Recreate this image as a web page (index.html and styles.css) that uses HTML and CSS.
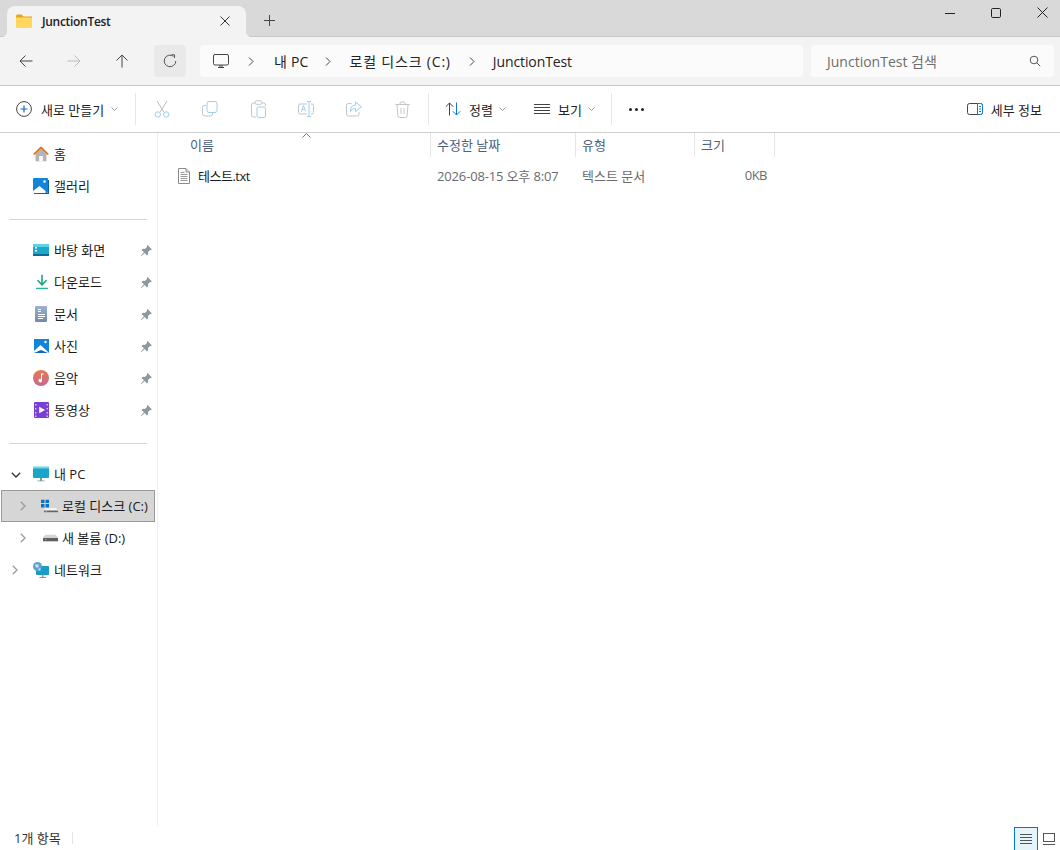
FILE: index.html
```html
<!DOCTYPE html>
<html lang="ko">
<head>
<meta charset="utf-8">
<title>JunctionTest</title>
<link rel="stylesheet" href="styles.css">
</head>
<body>
<div class="window">
  <header class="titlebar">
    <div class="tab">
      <svg class="tab-folder" width="16" height="14" viewBox="0 0 16 14"><path d="M0 2a1.500 1.500 0 0 1 1.500-1.500h4L7.500 2.500H16V4H0z" fill="#e8a618"/><path d="M0 3.500h14.500A1.500 1.500 0 0 1 16 5v7.500a1.500 1.500 0 0 1-1.500 1.500h-13A1.500 1.500 0 0 1 0 12.500z" fill="#ffd75e"/></svg>
      <span class="tab-title">JunctionTest</span>
      <svg class="tab-close" width="10" height="10" viewBox="0 0 10 10"><path d="M.5.5l9 9M9.500.5l-9 9" stroke="#333" fill="none"/></svg>
    </div>
    <svg class="tab-plus" width="11" height="11" viewBox="0 0 11 11"><path d="M5.500 0v11M0 5.500h11" stroke="#444" fill="none"/></svg>
    <div class="winctl">
      <span class="winbtn"><svg width="10" height="10" viewBox="0 0 10 10"><path d="M0 5.500h10" stroke="#222" fill="none"/></svg></span>
      <span class="winbtn"><svg width="10" height="10" viewBox="0 0 10 10"><rect x=".5" y=".5" width="9" height="9" rx="1.200" stroke="#222" fill="none"/></svg></span>
      <span class="winbtn"><svg width="11" height="11" viewBox="0 0 11 11"><path d="M.5.5l10 10M10.500.5l-10 10" stroke="#222" fill="none"/></svg></span>
    </div>
  </header>

  <nav class="navbar">
    <span class="navbtn"><svg width="14" height="14" viewBox="0 0 14 14"><path d="M13.500 7H1M6.500 1.500L1 7l5.500 5.500" stroke="#444" fill="none"/></svg></span>
    <span class="navbtn"><svg width="14" height="14" viewBox="0 0 14 14"><path d="M.5 7H13M7.500 1.500L13 7l-5.500 5.500" stroke="#bbb" fill="none"/></svg></span>
    <span class="navbtn"><svg width="14" height="14" viewBox="0 0 14 14"><path d="M7 13.500V1M1.500 6.500L7 1l5.500 5.500" stroke="#444" fill="none"/></svg></span>
    <span class="navbtn refresh"><svg width="14" height="14" viewBox="0 0 14 14"><path d="M10.500 2.300A5.800 5.800 0 1 0 12.800 7" stroke="#555" fill="none"/><path d="M8.500.8h3v3.200" stroke="#555" fill="none"/></svg></span>
    <div class="address">
      <svg class="pc-glyph" width="16" height="15" viewBox="0 0 16 15"><rect x=".5" y=".5" width="15" height="10.500" rx="1.500" stroke="#444" fill="none"/><path d="M5 13.500h6M7 11v2M9 11v2" stroke="#444" fill="none"/></svg>
      <svg class="crumb-chev c1" width="6" height="9" viewBox="0 0 6 9"><path d="M1 .5l4 4-4 4" stroke="#444" fill="none"/></svg>
      <span class="crumb c-pc">내 PC</span>
      <svg class="crumb-chev c2" width="6" height="9" viewBox="0 0 6 9"><path d="M1 .5l4 4-4 4" stroke="#444" fill="none"/></svg>
      <span class="crumb c-disk">로컬 디스크 (C:)</span>
      <svg class="crumb-chev c3" width="6" height="9" viewBox="0 0 6 9"><path d="M1 .5l4 4-4 4" stroke="#444" fill="none"/></svg>
      <span class="crumb c-folder">JunctionTest</span>
    </div>
    <div class="search">
      <span class="search-text">JunctionTest 검색</span>
      <svg width="12" height="12" viewBox="0 0 12 12"><circle cx="5" cy="5" r="3.800" stroke="#555" fill="none"/><path d="M7.800 7.800L11.200 11.200" stroke="#555" fill="none"/></svg>
    </div>
  </nav>

  <div class="toolbar">
    <div class="tool tool-new">
      <svg width="16" height="16" viewBox="0 0 16 16"><circle cx="8" cy="8" r="7.400" stroke="#444" fill="none"/><path d="M8 4.500v7M4.500 8h7" stroke="#0a6fc9" stroke-width="1.200" fill="none"/></svg>
      <span>새로 만들기</span>
      <svg class="caret" width="7" height="4" viewBox="0 0 7 4"><path d="M.5.500l3 3 3-3" stroke="#999" fill="none"/></svg>
    </div>
    <i class="tsep tsep-a"></i>
    <div class="iconbtn"><svg width="16" height="18" viewBox="0 0 16 18"><path d="M3 1l7.200 11.500M13 1L5.800 12.500" stroke="#bdbdbd" fill="none"/><circle cx="3.800" cy="14.500" r="2.700" stroke="#9fcdf2" fill="none"/><circle cx="12.200" cy="14.500" r="2.700" stroke="#9fcdf2" fill="none"/></svg></div>
    <div class="iconbtn"><svg width="16" height="16" viewBox="0 0 16 16"><path d="M4 4.500H2.500a2 2 0 0 0-2 2v6a2.500 2.500 0 0 0 2.500 2.500h5.500a2 2 0 0 0 2-2V12" stroke="#c4c4c4" fill="none"/><rect x="5" y=".5" width="10" height="11" rx="2" stroke="#9fcdf2" fill="none"/></svg></div>
    <div class="iconbtn"><svg width="15" height="18" viewBox="0 0 15 18"><path d="M4 3H2.500a2 2 0 0 0-2 2v10a2 2 0 0 0 2 2H5M11 3h1.500a2 2 0 0 1 2 2v1" stroke="#c4c4c4" fill="none"/><rect x="4" y=".8" width="7" height="3.500" rx="1.500" stroke="#c4c4c4" fill="none"/><rect x="6" y="7" width="8.500" height="10.500" rx="1.500" stroke="#9fcdf2" fill="none"/></svg></div>
    <div class="iconbtn"><svg width="16" height="16" viewBox="0 0 16 16"><path d="M9 3H2a1.500 1.500 0 0 0-1.500 1.500v7A1.500 1.500 0 0 0 2 13h7M13 3h1a1.500 1.500 0 0 1 1.500 1.500v7A1.500 1.500 0 0 1 14 13h-1" stroke="#c4c4c4" fill="none"/><path d="M9 .5h4M11 .5v15M9 15.500h4M3.500 10.500l2-6 2 6M4.300 8.500h2.400" stroke="#9fcdf2" fill="none"/></svg></div>
    <div class="iconbtn"><svg width="16" height="16" viewBox="0 0 16 16"><path d="M5.500 2.500H2.500a2 2 0 0 0-2 2v8.500a2 2 0 0 0 2 2h8.500a2 2 0 0 0 2-2v-2" stroke="#c4c4c4" fill="none"/><path d="M9.500 1v3C6 4.200 4.300 6.500 4.500 10.500 6 8 7.500 7.500 9.500 7.500v3l6-4.800z" stroke="#9fcdf2" fill="none"/></svg></div>
    <div class="iconbtn"><svg width="15" height="17" viewBox="0 0 15 17"><path d="M.5 3.500h14M5 3.500V2.300A1.300 1.300 0 0 1 6.300 1h2.400A1.300 1.300 0 0 1 10 2.300v1.200M2 3.500l.9 11.200a1.800 1.800 0 0 0 1.800 1.800h5.600a1.800 1.800 0 0 0 1.800-1.800L13 3.500M6 7v6M9 7v6" stroke="#c4c4c4" fill="none"/></svg></div>
    <i class="tsep tsep-b"></i>
    <div class="tool tool-sort">
      <svg width="16" height="14" viewBox="0 0 16 14"><path d="M4.500 13.500V1M.8 4.700L4.500 1l3.700 3.700" stroke="#444" fill="none"/><path d="M11.500.5V13M7.800 9.300l3.700 3.700 3.700-3.700" stroke="#0a78d4" fill="none"/></svg>
      <span>정렬</span>
      <svg class="caret" width="7" height="4" viewBox="0 0 7 4"><path d="M.5.500l3 3 3-3" stroke="#999" fill="none"/></svg>
    </div>
    <div class="tool tool-view">
      <svg width="16" height="11" viewBox="0 0 16 11"><path d="M0 .5h16M0 3.500h16M0 6.500h16M0 9.500h16" stroke="#444" fill="none"/></svg>
      <span>보기</span>
      <svg class="caret" width="7" height="4" viewBox="0 0 7 4"><path d="M.5.500l3 3 3-3" stroke="#999" fill="none"/></svg>
    </div>
    <i class="tsep"></i>
    <div class="dots"><i></i><i></i><i></i></div>
    <div class="tool tool-detail">
      <svg width="16" height="12" viewBox="0 0 16 12"><rect x=".5" y=".5" width="15" height="11" rx="2" stroke="#444" fill="none"/><path d="M10.500.5h3a2 2 0 0 1 2 2v7a2 2 0 0 1-2 2h-3z" stroke="#0a78d4" fill="#fff"/><path d="M12 3.500h2M12 6h2M12 8.500h2" stroke="#0a78d4" fill="none"/></svg>
      <span>세부 정보</span>
    </div>
  </div>

  <div class="body">
    <aside class="sidebar">
      <div class="nav-row"><svg class="ni" width="16" height="15" viewBox="0 0 16 15"><path d="M2.500 7v7a1 1 0 0 0 1 1h9a1 1 0 0 0 1-1V7L8 2z" fill="#b5b5b5"/><rect x="6.200" y="9.500" width="3.600" height="5.500" fill="#fff"/><path d="M.7 8L8 1l7.300 7" stroke="#e0700f" stroke-width="1.700" fill="none"/></svg><span>홈</span></div>
      <div class="nav-row"><svg class="ni" width="16" height="16" viewBox="0 0 16 16"><rect y="0" width="15" height="15" rx="1" fill="#1484d8"/><path d="M0 13l6.500-5 6 5v2H0z" fill="#fff"/><circle cx="11.500" cy="3.500" r="1.300" fill="#fff"/><path d="M15 2h1v14H1v-1h14z" fill="#0b63b0"/></svg><span>갤러리</span></div>
      <hr class="nav-sep">
      <div class="nav-row pinned"><svg class="ni" width="16" height="12" viewBox="0 0 16 12"><rect width="16" height="12" rx="1" fill="#1ca9c9"/><rect width="16" height="3" fill="#5cd2e6"/><rect y="10" width="16" height="2" fill="#0d6c91"/><path d="M2 3h2v1.500H2zM2 6h2v1.500H2z" fill="#fff"/></svg><span>바탕 화면</span><svg class="pin" width="11" height="11" viewBox="0 0 11 11"><path d="M6.500 0L11 4.500l-1 .6-1-.2-2 2.300.2 2L6 10.500 3.700 8 .6 11 0 10.400l3-3.100L.5 5l1.300-1.200 2 .2L6 2l-.2-1z" fill="#8d98a3"/></svg></div>
      <div class="nav-row pinned"><svg class="ni ni-dl" width="12" height="15" viewBox="0 0 12 15"><path d="M6 0v9.500M1.500 5.800L6 10.300l4.500-4.500" stroke="#1ba784" stroke-width="1.600" fill="none"/><path d="M0 14h12" stroke="#28b59a" stroke-width="1.600"/></svg><span>다운로드</span><svg class="pin" width="11" height="11" viewBox="0 0 11 11"><path d="M6.500 0L11 4.500l-1 .6-1-.2-2 2.300.2 2L6 10.500 3.700 8 .6 11 0 10.400l3-3.100L.5 5l1.300-1.200 2 .2L6 2l-.2-1z" fill="#8d98a3"/></svg></div>
      <div class="nav-row pinned"><svg class="ni ni-doc" width="12" height="16" viewBox="0 0 12 16"><defs><linearGradient id="doc" x1="0" y1="0" x2="0" y2="1"><stop offset="0" stop-color="#9fb2cc"/><stop offset="1" stop-color="#7089ab"/></linearGradient></defs><rect width="12" height="16" rx="1" fill="url(#doc)"/><path d="M3 3.500h3M3 5.500h3M3 8.500h7M3 10.500h7M3 12.500h5" stroke="#fff" fill="none"/></svg><span>문서</span><svg class="pin" width="11" height="11" viewBox="0 0 11 11"><path d="M6.500 0L11 4.500l-1 .6-1-.2-2 2.300.2 2L6 10.500 3.700 8 .6 11 0 10.400l3-3.100L.5 5l1.300-1.200 2 .2L6 2l-.2-1z" fill="#8d98a3"/></svg></div>
      <div class="nav-row pinned"><svg class="ni ni-nudge" width="15" height="14" viewBox="0 0 15 14"><rect width="15" height="14" fill="#1484d8"/><path d="M0 12l6.500-6 6.500 6 2 2H0z" fill="#fff"/><path d="M0 14l7-3 7 3z" fill="#1169b5"/><circle cx="11.500" cy="3" r="1.200" fill="#fff"/></svg><span>사진</span><svg class="pin" width="11" height="11" viewBox="0 0 11 11"><path d="M6.500 0L11 4.500l-1 .6-1-.2-2 2.300.2 2L6 10.500 3.700 8 .6 11 0 10.400l3-3.100L.5 5l1.300-1.200 2 .2L6 2l-.2-1z" fill="#8d98a3"/></svg></div>
      <div class="nav-row pinned"><svg class="ni" width="16" height="16" viewBox="0 0 16 16"><defs><linearGradient id="mus" x1="0" y1="0" x2="0" y2="1"><stop offset="0" stop-color="#e87a4e"/><stop offset="1" stop-color="#c8668f"/></linearGradient></defs><circle cx="8" cy="8" r="8" fill="url(#mus)"/><path d="M8 3.500h2.500v1.300H9V10.500A1.800 1.800 0 1 1 8 9z" fill="#fff"/></svg><span>음악</span><svg class="pin" width="11" height="11" viewBox="0 0 11 11"><path d="M6.500 0L11 4.500l-1 .6-1-.2-2 2.300.2 2L6 10.500 3.700 8 .6 11 0 10.400l3-3.100L.5 5l1.300-1.200 2 .2L6 2l-.2-1z" fill="#8d98a3"/></svg></div>
      <div class="nav-row pinned"><svg class="ni ni-nudge" width="15" height="16" viewBox="0 0 15 16"><rect width="15" height="16" rx="1" fill="#7b3fd6"/><path d="M5.200 4.800v6.400L11 8z" fill="#fff"/><path d="M1 2h1.500v1.500H1zM1 6h1.500v1.500H1zM1 10h1.500v1.500H1zM1 13.500h1.500V15H1zM12.500 2H14v1.500h-1.500zM12.500 6H14v1.500h-1.500zM12.500 10H14v1.500h-1.500zM12.500 13.500H14V15h-1.500z" fill="#d6bdf5"/></svg><span>동영상</span><svg class="pin" width="11" height="11" viewBox="0 0 11 11"><path d="M6.500 0L11 4.500l-1 .6-1-.2-2 2.300.2 2L6 10.500 3.700 8 .6 11 0 10.400l3-3.100L.5 5l1.300-1.200 2 .2L6 2l-.2-1z" fill="#8d98a3"/></svg></div>
      <hr class="nav-sep">
      <div class="nav-row has-chev"><svg class="chev" width="10" height="6" viewBox="0 0 10 6"><path d="M.8.800L5 5 9.200.8" stroke="#333" stroke-width="1.300" fill="none"/></svg><svg class="ni" width="16" height="15" viewBox="0 0 16 15"><rect width="16" height="11.500" rx="1" fill="#1aa5c9"/><rect width="16" height="2" fill="#6bdcec"/><path d="M7 11.500h2V14H7zM4.500 14h7v1h-7z" fill="#7a9aa8"/></svg><span>내 PC</span></div>
      <div class="nav-row sub selected"><svg class="chev r" width="6" height="10" viewBox="0 0 6 10"><path d="M.8.800L5 5 .8 9.200" stroke="#999" stroke-width="1.300" fill="none"/></svg><svg class="ni" width="17" height="13" viewBox="0 0 17 13"><path d="M0 0h3.500v3.500H0zM4.500 0H8v3.500H4.500zM0 4.500h3.500V8H0zM4.500 4.500H8V8H4.500z" fill="#1070c4"/><path d="M5 8.500h9.500L17 10.500v2.500H3v-2.500z" fill="#f4f4f4"/><rect x="3" y="11" width="14" height="2" fill="#666"/><rect x="4.500" y="11.500" width="1.500" height="1" fill="#4fd45f"/></svg><span>로컬 디스크 (C:)</span></div>
      <div class="nav-row sub"><svg class="chev r" width="6" height="10" viewBox="0 0 6 10"><path d="M.8.800L5 5 .8 9.200" stroke="#999" stroke-width="1.300" fill="none"/></svg><svg class="ni ni-vol" width="15" height="7" viewBox="0 0 15 7"><path d="M2.500 0h10L15 3v4H0V3z" fill="#d4d4d4"/><rect y="3.500" width="15" height="3.500" fill="#5f5f5f"/><rect x="2" y="4.500" width="1.500" height="1" fill="#4fd45f"/></svg><span>새 볼륨 (D:)</span></div>
      <div class="nav-row has-chev"><svg class="chev r" width="6" height="10" viewBox="0 0 6 10"><path d="M.8.800L5 5 .8 9.200" stroke="#999" stroke-width="1.300" fill="none"/></svg><svg class="ni" width="16" height="16" viewBox="0 0 16 16"><rect x="3" y="4" width="13" height="9" rx="1" fill="#1a9cc4"/><circle cx="4.500" cy="4.500" r="4.500" fill="#5c9fd0"/><path d="M2 2.500h3.500v3H3zM5.500 6.500h2v2h-2z" fill="#cfe6f2"/><path d="M9 13h1.500v2H9zM6.500 15h6.500v1H6.500z" fill="#7a9aa8"/></svg><span>네트워크</span></div>
    </aside>

    <main class="content">
      <div class="headers">
        <div class="col col-name">이름</div>
        <div class="col">수정한 날짜</div>
        <div class="col">유형</div>
        <div class="col">크기</div>
        <svg class="sort-caret" width="9" height="5" viewBox="0 0 9 5"><path d="M.5 4.500l4-4 4 4" stroke="#777" fill="none"/></svg>
      </div>
      <div class="file-row">
        <div class="cell cell-name">
          <svg width="12" height="16" viewBox="0 0 12 16"><path d="M.5.500h7.500l3.500 3.500v11.500H.5z" fill="#fff" stroke="#8a8a8a"/><path d="M8 .5V4h3.500" fill="#e4e4e4" stroke="#8a8a8a"/><path d="M2.500 4.500h4M2.500 6.500h7M2.500 8.500h7M2.500 10.500h7M2.500 12.500h7" stroke="#9a9a9a" fill="none"/></svg>
          <span>테스트.txt</span>
        </div>
        <div class="cell muted date">2026-08-15 오후 8:07</div>
        <div class="cell muted">텍스트 문서</div>
        <div class="cell muted size">0KB</div>
      </div>
    </main>
  </div>

  <footer class="status">
    <span class="count">1개 항목</span>
    <i class="status-sep"></i>
    <span class="viewbtn active"><svg width="12" height="11" viewBox="0 0 12 11"><path d="M0 .5h12M0 3.500h12M0 6.500h12M0 9.500h12" stroke="#555" fill="none"/></svg></span>
    <span class="viewbtn plain"><svg width="12" height="12" viewBox="0 0 12 12"><rect x=".5" y=".5" width="11" height="8" stroke="#555" fill="none"/><path d="M0 11.500h12" stroke="#555" fill="none"/></svg></span>
  </footer>
</div>
</body>
</html>
```
FILE: styles.css
```css
* { box-sizing: border-box; }
html, body { margin: 0; height: 100%; }
body {
  background: #fff;
  color: #1a1a1a;
  font-family: "Open Sans", "Noto Sans CJK KR", sans-serif;
  font-size: 13px;
}
svg { display: block; flex: none; }
.window { width: 1060px; height: 850px; display: flex; flex-direction: column; overflow: hidden; }

/* title bar */
.titlebar { height: 37px; background: #d9d9d9; border-bottom: 1px solid #c8c8c8; display: flex; align-items: flex-end; flex: none; }
.tab { width: 239px; height: 31px; margin-left: 7px; margin-bottom: -1px; background: #f3f3f3; border-radius: 8px 8px 0 0; display: flex; align-items: center; padding: 0 16px 1px 9px; position: relative; }
.tab::before, .tab::after { content: ""; position: absolute; bottom: 0; width: 6px; height: 6px; }
.tab::before { left: -6px; background: radial-gradient(circle at 0 0, transparent 6px, #f3f3f3 6.5px); }
.tab::after { right: -6px; background: radial-gradient(circle at 100% 0, transparent 6px, #f3f3f3 6.5px); }
.tab-title { margin-left: 10px; flex: 1; font-size: 12px; font-weight: 600; letter-spacing: -.3px; color: #222; }
.tab-plus { margin: 0 0 10px 18px; }
.winctl { margin-left: auto; margin-right: -5px; align-self: flex-start; display: flex; }
.winbtn { width: 46px; height: 25px; display: flex; align-items: center; justify-content: center; }

/* navigation */
.navbar { height: 49px; flex: none; background: #f3f3f3; border-bottom: 1px solid #c9c9c9; display: flex; align-items: center; padding: 0 6px 0 2px; }
.navbtn { width: 48px; height: 32px; display: flex; align-items: center; justify-content: center; }
.navbtn.refresh { width: 32px; background: #e9e9e9; border-radius: 4px; margin-left: 8px; }
.address { width: 603px; height: 32px; margin-left: 14px; background: #fbfbfb; border-radius: 4px; display: flex; align-items: center; padding-left: 13px; font-size: 14px; color: #222; }
.crumb { white-space: nowrap; }
.c1 { margin-left: 19px; }
.c-pc { margin-left: 20px; letter-spacing: .2px; }
.c2 { margin-left: 16px; }
.c-disk { margin-left: 19px; letter-spacing: .8px; }
.c3 { margin-left: 18px; }
.c-folder { margin-left: 18px; letter-spacing: -.1px; }
.search { flex: 1; height: 32px; margin-left: 8px; background: #fbfbfb; border-radius: 4px; display: flex; align-items: center; justify-content: space-between; padding: 0 13px 0 16px; font-size: 14px; color: #6d6d6d; }

/* toolbar */
.toolbar { height: 47px; flex: none; background: #fff; border-bottom: 1px solid #cfcfcf; display: flex; align-items: center; padding-left: 16px; color: #222; }
.tool { display: flex; align-items: center; }
.tool span { white-space: nowrap; }
.caret { margin-left: 6px; }
.tool-new { width: 119px; }
.tool-new span { margin-left: 9px; }
.tool-new .caret { margin-left: 7px; }
.tsep { width: 1px; height: 32px; background: #e6e6e6; flex: none; }
.tsep-a { margin-right: 2px; }
.tsep-b { margin-left: 2px; }
.iconbtn { width: 48px; height: 32px; display: flex; align-items: center; justify-content: center; }
.tool-sort { margin-left: 16px; width: 89px; }
.tool-sort span { margin-left: 8px; }
.tool-view { width: 77px; }
.tool-view span { margin-left: 8px; }
.dots { display: flex; gap: 3px; margin-left: 17px; }
.dots i { width: 3px; height: 3px; border-radius: 50%; background: #222; }
.tool-detail { margin-left: auto; padding-right: 18px; }
.tool-detail span { margin-left: 8px; }

/* body */
.body { flex: 1; display: flex; min-height: 0; }
.sidebar { width: 158px; flex: none; border-right: 1px solid #f0f0f0; padding-top: 5px; color: #1a1a1a; }
.nav-row { height: 32px; display: flex; align-items: center; padding-left: 33px; position: relative; }
.nav-row .ni { position: absolute; left: 33px; top: 50%; transform: translateY(-50%); }
.nav-row .ni-dl { left: 36px; }
.nav-row .ni-doc { left: 35px; }
.nav-row .ni-nudge { left: 34px; }
.nav-row span { margin-left: 21px; padding-bottom: 2px; white-space: nowrap; }
.nav-row .pin { position: absolute; left: 141px; top: 11px; }
.nav-sep { height: 1px; border: 0; background: #d6d6d6; margin: 17px 10px 14px 9px; }
.nav-row .chev { position: absolute; left: 11px; top: 14px; }
.nav-row .chev.r { left: 12px; top: 11px; }
.nav-row.sub { padding-left: 41px; }
.nav-row.sub .ni { left: 41px; }
.nav-row.sub .ni-vol { left: 43px; }
.nav-row.sub .chev.r { left: 20px; }
.nav-row.selected { width: 154px; margin-left: 1px; background: #d6d6d6; outline: 1px solid #9a9a9a; outline-offset: -1px; }
.nav-row.selected .chev.r { left: 19px; }
.nav-row.selected .ni { left: 40px; }
.nav-row.selected span { margin-left: 20px; }

/* file list */
.content { flex: 1; position: relative; min-width: 0; }
.headers, .file-row { display: grid; grid-template-columns: 273px 145px 119px 80px; }
.headers { height: 24px; color: #4c607a; }
.col { border-right: 1px solid #e5e5e5; padding: 1px 0 0 6px; line-height: 22px; }
.col-name { padding-left: 32px; }
.sort-caret { position: absolute; left: 144px; top: 0; }
.file-row { height: 32px; margin-top: 3px; align-items: center; }
.cell { padding-left: 6px; padding-bottom: 2px; white-space: nowrap; }
.cell-name { display: flex; align-items: center; padding-left: 20px; padding-bottom: 0; color: #1a1a1a; letter-spacing: -.5px; }
.cell-name span { margin-left: 8px; padding-bottom: 2px; }
.muted { color: #6b6b6b; }
.date { letter-spacing: -.15px; }
.size { text-align: right; padding-right: 8px; letter-spacing: -.5px; }

/* status bar */
.status { height: 24px; flex: none; display: flex; align-items: center; padding-left: 14px; color: #333; }
.count { padding-bottom: 2px; }
.status-sep { width: 1px; height: 12px; background: #e5e5e5; margin-left: 11px; }
.viewbtn { height: 23px; align-self: flex-end; display: flex; align-items: center; justify-content: center; }
.viewbtn.active { width: 24px; margin-left: auto; background: #e5f3fb; border: 1px solid #0078d4; border-bottom: 0; }
.viewbtn.plain { width: 22px; }
```
